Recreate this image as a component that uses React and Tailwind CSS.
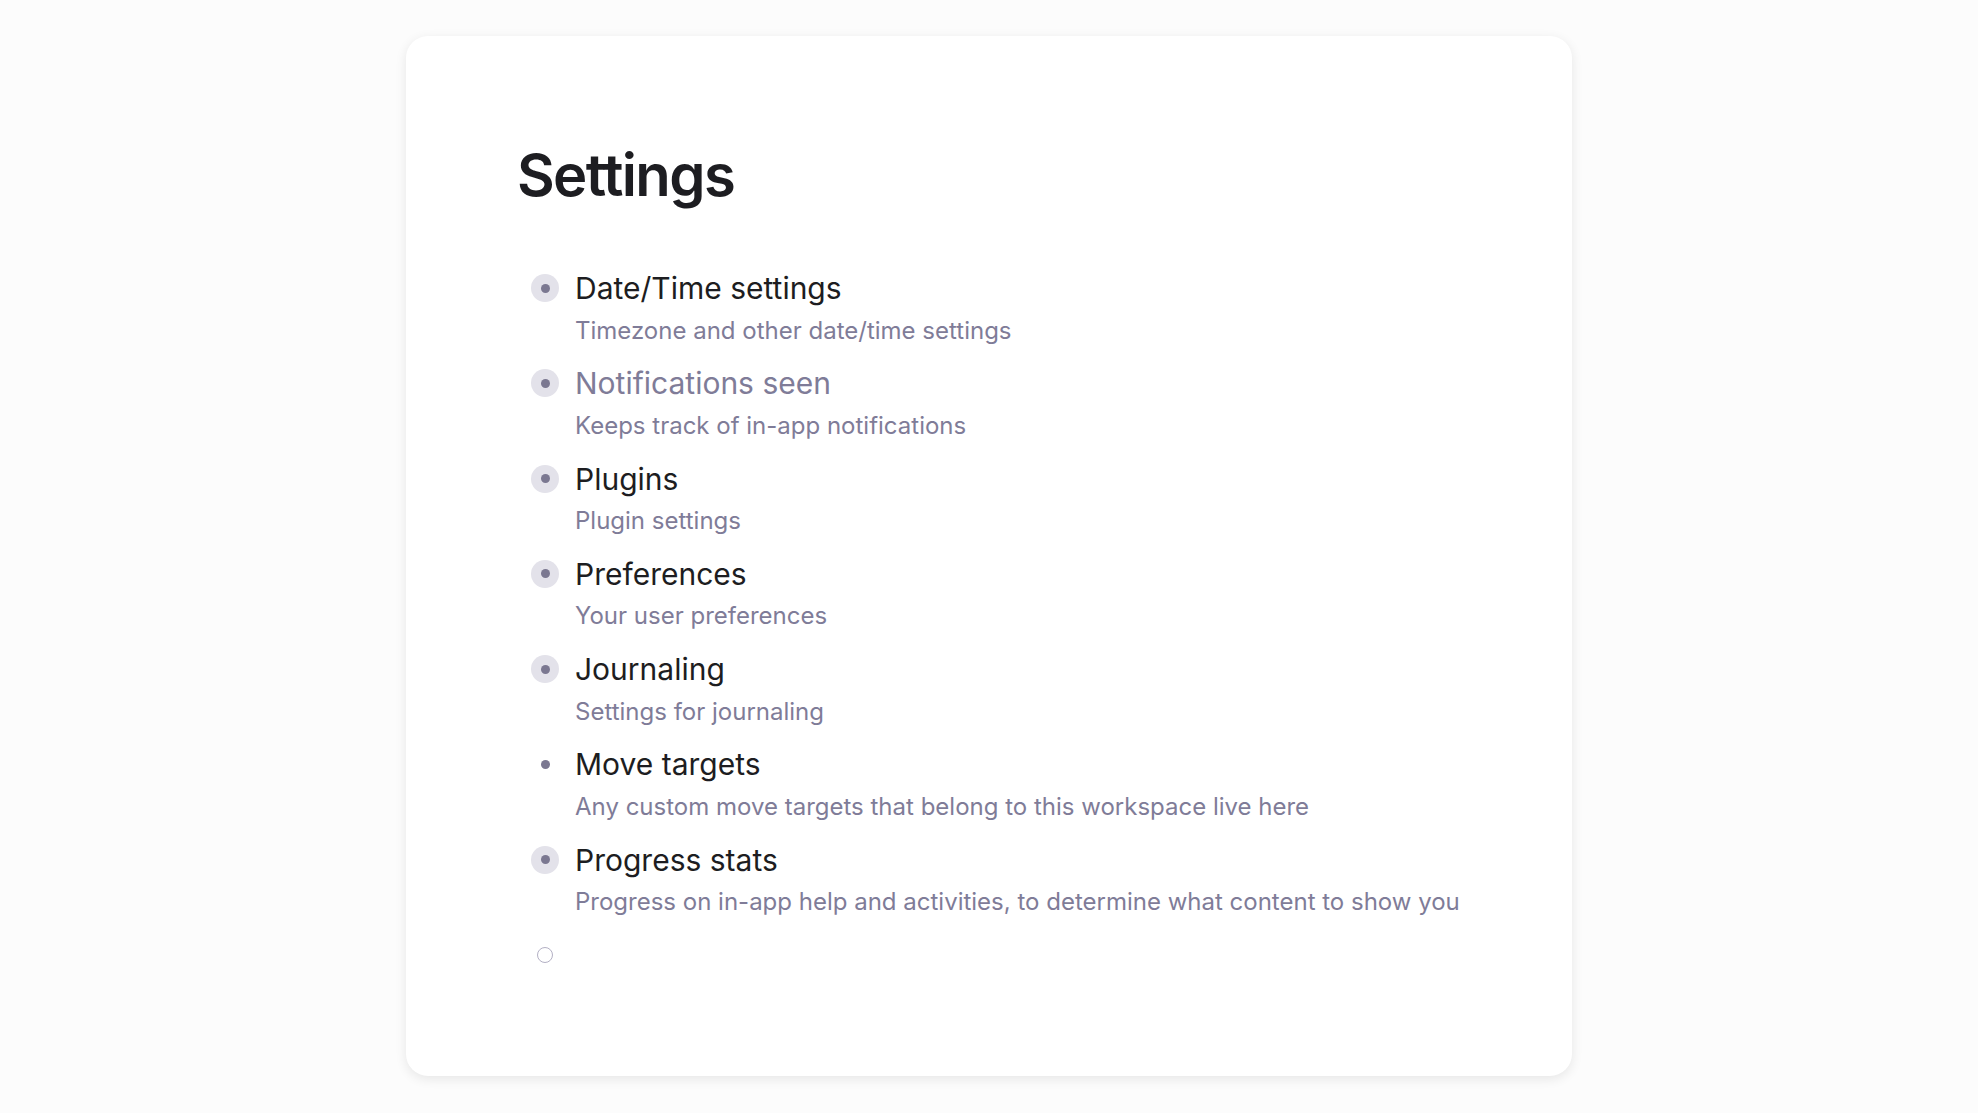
import React from 'react';

const items = [
    { title: 'Date/Time settings', desc: 'Timezone and other date/time settings', ring: true },
    { title: 'Notifications seen', desc: 'Keeps track of in-app notifications', ring: true, muted: true },
    { title: 'Plugins', desc: 'Plugin settings', ring: true },
    { title: 'Preferences', desc: 'Your user preferences', ring: true },
    { title: 'Journaling', desc: 'Settings for journaling', ring: true },
    { title: 'Move targets', desc: 'Any custom move targets that belong to this workspace live here', ring: false },
    { title: 'Progress stats', desc: 'Progress on in-app help and activities, to determine what content to show you', ring: true },
];

const Bullet = ({ ring }) => (
    <div className="w-[28px] h-[40px] flex items-center justify-center shrink-0">
        <div className={`w-[28px] h-[28px] rounded-full flex items-center justify-center ${ring ? 'bg-[#e3e2ea]' : ''}`}>
            <div className="w-[9px] h-[9px] rounded-full bg-[#7b7891]" />
        </div>
    </div>
);

const App = () => {
    return (
        <div className="min-h-screen bg-[#fcfcfc] pt-[36px] font-['Inter',sans-serif]">
            <div className="mx-auto w-[1166px] h-[1040px] bg-white rounded-[22px] shadow-[0_3px_12px_rgba(0,0,0,0.09)] pl-[111px] pt-[110px]">
                <h1 className="text-[58px] leading-[58px] font-semibold text-[#1d1d21] tracking-[-1.6px]">Settings</h1>

                <div className="mt-[64px] ml-[14px] flex flex-col">
                    {items.map(item => (
                        <div key={item.title} className="flex gap-[16px] mb-[16.75px]">
                            <Bullet ring={item.ring} />
                            <div className="flex flex-col gap-[6.5px]">
                                <div className={`text-[30px] leading-[40px] ${item.muted ? 'text-[#7f7c98]' : 'text-[#1d1d21]'}`}>
                                    {item.title}
                                </div>
                                <div className="text-[24px] leading-[32px] text-[#7f7c98]">{item.desc}</div>
                            </div>
                        </div>
                    ))}

                    {/* Empty new-item bullet */}
                    <div className="flex gap-[16px]">
                        <div className="w-[28px] h-[40px] flex items-center justify-center">
                            <div className="w-[16px] h-[16px] rounded-full border-[1.5px] border-[#b3b0c4]" />
                        </div>
                    </div>
                </div>
            </div>
        </div>
    );
};

export default App;
